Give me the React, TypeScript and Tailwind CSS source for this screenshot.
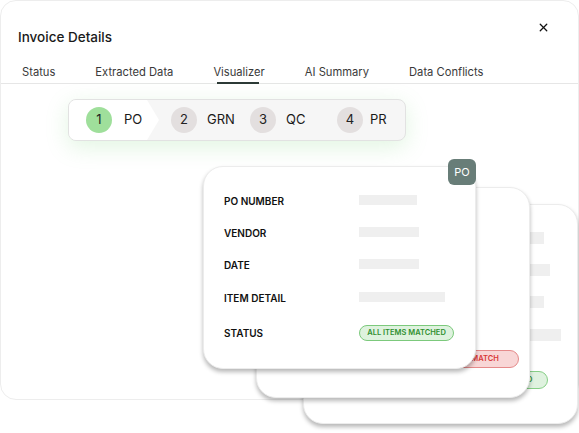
import { X } from "lucide-react";

const tabs = ["Status", "Extracted Data", "Visualizer", "AI Summary", "Data Conflicts"];

const steps = [
  { n: 1, label: "PO", w: "w-[85px]", gap: "gap-[12px]", active: true },
  { n: 2, label: "GRN", w: "w-[79px]", gap: "gap-[10px]", active: false },
  { n: 3, label: "QC", w: "w-[87px]", gap: "gap-[10px]", active: false },
  { n: 4, label: "PR", w: "w-[60px]", gap: "gap-[7px]", active: false },
];

const rows = [
  { label: "PO NUMBER", h: "h-[32px]" },
  { label: "VENDOR", h: "h-[32px]" },
  { label: "DATE", h: "h-[32px]" },
  { label: "ITEM DETAIL", h: "h-[35px]" },
];

interface CardProps {
  className: string;
  bars: string[];
  valueX: string;
  badge: React.ReactNode;
  tag?: string;
  barH?: string;
  labels?: boolean;
}

// stacked cards: only the front one shows its labels, the others sit behind it
const Card = ({ className, bars, valueX, badge, tag, barH = "h-[10px]", labels = false }: CardProps) => {
  return (
    <div
      className={`absolute rounded-[20px] border border-[#ececec] bg-white shadow-[0_3px_4px_rgba(0,0,0,0.28)] ${className}`}
    >
      {tag && (
        <div className="absolute -top-[8px] -right-[1px] flex h-[26px] w-[28px] items-center justify-center rounded-md bg-[#687d78] text-[11px] text-white">
          {tag}
        </div>
      )}
      <div className="flex flex-col pt-[18px] pl-[20px]">
        {rows.map((r, i) => (
          <div key={r.label} className={`flex items-center ${r.h}`}>
            <span className="w-[135px] shrink-0 text-[10px] font-semibold text-[#111]">
              {labels ? r.label : ""}
            </span>
            <div className={`${valueX} -mt-[3px] shrink-0 bg-[#efefef] ${barH} ${bars[i]}`} />
          </div>
        ))}
        <div className="flex h-[35px] items-center">
          <span className="w-[135px] shrink-0 text-[10px] font-semibold text-[#111]">
            {labels ? "STATUS" : ""}
          </span>
          <div className={`${valueX} -mt-[2px] shrink-0`}>{badge}</div>
        </div>
      </div>
    </div>
  );
};

export default function App() {
  return (
    <div className="h-[433px] w-[579px] overflow-hidden bg-white font-['Inter',sans-serif]">
      <div className="relative h-[400px] w-full rounded-2xl border border-[#ededed] bg-white">
        <div className="flex items-center justify-between pt-[26px] pl-[17px] pr-[28px]">
          <h2 className="text-[13.5px] leading-5 font-medium text-[#1a1a1a]">Invoice Details</h2>
          <X size={13} strokeWidth={2.4} className="-mt-[20px] text-[#111]" />
        </div>

        <div className="mt-[17px] flex gap-[40px] border-b border-[#e6e6e6] pl-[21px]">
          {tabs.map((t) => (
            <div key={t} className="relative pb-[3px] text-[11.2px] leading-4 text-[#3a3a3a]">
              {t}
              {t === "Visualizer" && (
                <div className="absolute bottom-[-1px] left-[4px] right-[6px] h-[2px] bg-[#2c3a36]" />
              )}
            </div>
          ))}
        </div>

        <div className="mt-[15px] ml-[67px] w-[338px]">
          <div className="relative flex h-[42px] items-center overflow-hidden rounded-lg border border-[#e2e2e2] bg-[#f6f6f6] pl-[17px] shadow-[0_6px_22px_rgba(120,210,120,0.22)]">
            <div className="absolute top-0 left-0 h-full w-[90px] bg-white [clip-path:polygon(0_0,78px_0,100%_50%,78px_100%,0_100%)]" />
            {steps.map((s) => (
              <div key={s.n} className={`relative flex items-center ${s.w} ${s.gap}`}>
                <div
                  className={`flex h-[26px] w-[26px] items-center justify-center rounded-full text-[13px] text-[#222] ${
                    s.active ? "bg-[#9fdf9b]" : "bg-[#e3dfdf]"
                  }`}
                >
                  {s.n}
                </div>
                <span className="text-[13px] text-[#1a1a1a]">{s.label}</span>
              </div>
            ))}
          </div>
        </div>

        <Card
          className="top-[203px] left-[302px] h-[220px] w-[275px]"
          valueX="ml-[27px]"
          barH="h-[12px]"
          bars={["w-[58px]", "w-[64px]", "w-[58px]", "w-[75px]"]}
          badge={
            <div className="flex h-[18px] w-[110px] -translate-x-[48px] translate-y-[9px] items-center justify-center rounded-full border border-[#86cf86] bg-[#dff2df] text-[7.5px] font-semibold text-[#2f8f2f]">
              ALL ITEMS MATCHED
            </div>
          }
        />
        <Card
          className="top-[186px] left-[255px] h-[211px] w-[274px]"
          valueX="ml-0"
          bars={["w-[50px]", "w-[50px]", "w-[50px]", "w-[55px]"]}
          badge={
            <div className="mt-[10px] flex h-[18px] w-[107px] items-center justify-center rounded-full border border-[#e58a8a] bg-[#f8d6d6] pl-[6px] text-[7.5px] font-semibold text-[#d93636]">
              PARTIAL MATCH
            </div>
          }
        />
        <Card
          className="top-[165px] left-[202px] h-[203px] w-[273px]"
          valueX="ml-0"
          tag="PO"
          labels
          bars={["w-[58px]", "w-[60px]", "w-[60px]", "w-[86px]"]}
          badge={
            <div className="flex h-[16px] w-[95px] items-center justify-center rounded-full border border-[#7cc97c] bg-[#def2de] text-[7.5px] font-semibold text-[#2f8f2f]">
              ALL ITEMS MATCHED
            </div>
          }
        />
      </div>
    </div>
  );
}
